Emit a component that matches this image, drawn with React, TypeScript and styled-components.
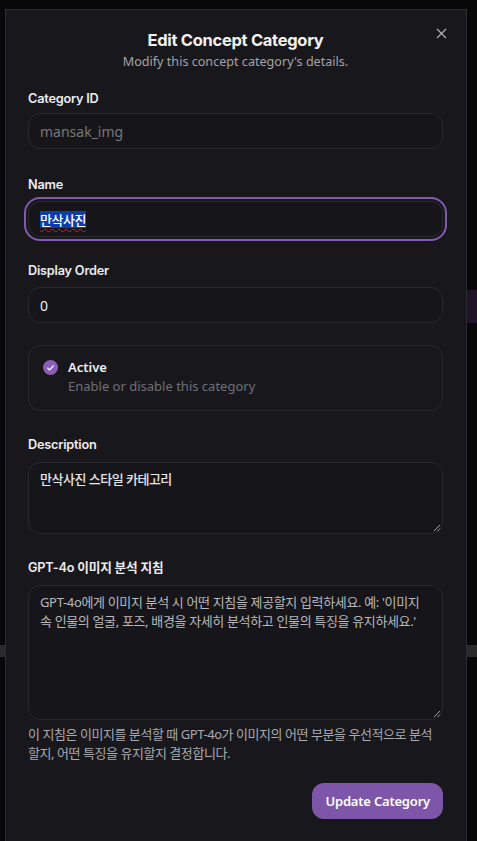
import React from "react";
import styled, { createGlobalStyle } from "styled-components";

const Global = createGlobalStyle`
  html, body { margin: 0; padding: 0; background: #050505; }
  body { font-family: "Noto Sans", "Noto Sans CJK KR", sans-serif; overflow: hidden; }
  * { box-sizing: border-box; }
`;

const Page = styled.div`
  position: relative;
  width: 477px;
  height: 841px;
  overflow: hidden;
  background: #080808;
`;

const Backdrop = styled.div`
  display: flex;
  flex-direction: column;
  padding-top: 290px;
`;

const BgRow = styled.div<{ $h: number; $mt: number; $bg: string }>`
  height: ${(p) => p.$h}px;
  margin-top: ${(p) => p.$mt}px;
  display: flex;
  justify-content: flex-end;
  background: ${(p) => p.$bg};
`;

const BgButton = styled.div`
  width: 30px;
  height: 33px;
  background: #1f1428;
  color: #4a3d57;
  font-size: 14px;
  display: flex;
  align-items: center;
  padding-left: 2px;
`;

const Dialog = styled.div`
  position: absolute;
  left: 5px;
  top: 9px;
  width: 462px;
  min-height: 860px;
  background: #18181c;
  border: 1px solid #2a2a30;
  padding: 18px 23px 24px 22px;
  display: flex;
  flex-direction: column;
`;

const Close = styled.button`
  position: absolute;
  top: 15px;
  right: 17px;
  width: 16px;
  height: 16px;
  padding: 0;
  border: 0;
  background: none;
  color: #a8a8ae;
  display: flex;
  align-items: center;
  justify-content: center;
`;

const Header = styled.div`
  display: flex;
  flex-direction: column;
  align-items: center;
  gap: 1px;
  margin-bottom: 19px;
`;

const Title = styled.h2`
  margin: 0;
  font-family: Inter, "Noto Sans", sans-serif;
  font-weight: 700;
  font-size: 16.5px;
  letter-spacing: -0.3px;
  color: #f2f2f2;
  line-height: 24px;
`;

const Subtitle = styled.p`
  margin: 0;
  font-size: 12.6px;
  color: #a3a3aa;
  line-height: 18px;
`;

const Field = styled.div<{ $gap?: number; $lg?: number }>`
  display: flex;
  flex-direction: column;
  gap: ${(p) => p.$lg ?? 7}px;
  margin-bottom: ${(p) => p.$gap ?? 25}px;
`;

const Label = styled.label`
  font-family: Inter, "Noto Sans", "Noto Sans CJK KR", sans-serif;
  font-weight: 600;
  font-size: 12.7px;
  letter-spacing: -0.2px;
  color: #ececee;
  line-height: 18px;
`;

const Box = styled.div<{ $focus?: boolean; $muted?: boolean }>`
  height: 36px;
  border-radius: 12px;
  border: 1px solid #28282e;
  background: #16161a;
  display: flex;
  align-items: center;
  padding: 0 11px;
  font-size: 14px;
  color: ${(p) => (p.$muted ? "#76767c" : "#ececee")};
  box-shadow: ${(p) => (p.$focus ? "0 0 0 2px #18181c, 0 0 0 4px #8559b0" : "none")};
`;

const Selected = styled.span`
  background: #0b3eaa;
  color: #ffffff;
  font-family: "Noto Sans CJK KR", sans-serif;
  font-weight: 500;
  font-size: 13px;
  letter-spacing: -0.5px;
  line-height: 17px;
  text-decoration: underline wavy #e0141e;
  text-underline-offset: 3px;
  text-decoration-thickness: 1px;
`;

const Card = styled.div`
  border: 1px solid #28282e;
  border-radius: 12px;
  padding: 12px 14px 14px 14px;
  display: flex;
  gap: 10px;
  align-items: flex-start;
  margin-top: -3px;
  margin-bottom: 25px;
`;

const Check = styled.span`
  width: 15px;
  height: 15px;
  border-radius: 50%;
  background: #8a5db8;
  display: flex;
  align-items: center;
  justify-content: center;
  margin-top: 2px;
  flex-shrink: 0;
`;

const CardText = styled.div`
  display: flex;
  flex-direction: column;
  gap: 1px;
`;

const CardTitle = styled.span`
  font-weight: 600;
  font-size: 13px;
  color: #f0f0f2;
  line-height: 18px;
`;

const CardSub = styled.span`
  font-size: 13px;
  color: #6f6f78;
  line-height: 19px;
`;

const Area = styled.div<{ $h: number }>`
  position: relative;
  height: ${(p) => p.$h}px;
  border-radius: 12px;
  border: 1px solid #28282e;
  background: #16161a;
  padding: 7px 11px;
  font-size: 13px;
  line-height: 19px;
  color: #dadade;
  font-family: "Noto Sans", "Noto Sans CJK KR", sans-serif;
`;

const AreaText = styled.div<{ $dim?: boolean }>`
  color: ${(p) => (p.$dim ? "#b9b9be" : "#e6e6ea")};
  font-weight: ${(p) => (p.$dim ? 400 : 500)};
  letter-spacing: ${(p) => (p.$dim ? "-0.35px" : "-0.5px")};
`;

const Grip = styled.svg`
  position: absolute;
  right: 1px;
  bottom: 1px;
`;

const Help = styled.p`
  margin: 5px 0 0 0;
  font-size: 13px;
  line-height: 19px;
  color: #a9a9b0;
  letter-spacing: -0.45px;
`;

const Footer = styled.div`
  display: flex;
  justify-content: flex-end;
  margin-top: 20px;
`;

const Button = styled.button`
  height: 36px;
  padding: 0 13px;
  border: 0;
  border-radius: 12px;
  background: #7e56a9;
  color: #ffffff;
  font-family: "Noto Sans", sans-serif;
  font-weight: 600;
  font-size: 13px;
  letter-spacing: -0.2px;
`;

const ResizeGrip = () => (
  <Grip width="9" height="9" viewBox="0 0 9 9">
    <path d="M8 2 L2 8 M8 5.5 L5.5 8" stroke="#a0a0a6" strokeWidth="1" />
  </Grip>
);

export default function App() {
  return (
    <Page>
      <Global />
      <Backdrop>
        <BgRow $h={33} $mt={0} $bg="transparent">
          <BgButton>y</BgButton>
        </BgRow>
        <BgRow $h={12} $mt={322} $bg="#2b2b2b" />
      </Backdrop>
      <Dialog>
        <Close aria-label="Close">
          <svg width="11" height="11" viewBox="0 0 11 11">
            <path d="M1 1 L10 10 M10 1 L1 10" stroke="#b0b0b6" strokeWidth="1.2" />
          </svg>
        </Close>
        <Header>
          <Title>Edit Concept Category</Title>
          <Subtitle>Modify this concept category's details.</Subtitle>
        </Header>

        <Field $lg={5} $gap={27}>
          <Label>Category ID</Label>
          <Box $muted>mansak_img</Box>
        </Field>

        <Field>
          <Label>Name</Label>
          <Box $focus>
            <Selected>만삭사진</Selected>
          </Box>
        </Field>

        <Field $lg={7}>
          <Label>Display Order</Label>
          <Box>0</Box>
        </Field>

        <Card>
          <Check>
            <svg width="9" height="9" viewBox="0 0 10 10">
              <path d="M1.5 5.2 L4 7.6 L8.6 2.6" stroke="#ffffff" strokeWidth="1.4" fill="none" />
            </svg>
          </Check>
          <CardText>
            <CardTitle>Active</CardTitle>
            <CardSub>Enable or disable this category</CardSub>
          </CardText>
        </Card>

        <Field $lg={8}>
          <Label>Description</Label>
          <Area $h={72}>
            <AreaText>만삭사진 스타일 카테고리</AreaText>
            <ResizeGrip />
          </Area>
        </Field>

        <Field $gap={0} $lg={8}>
          <Label>GPT-4o 이미지 분석 지침</Label>
          <Area $h={135}>
            <AreaText $dim>
              GPT-4o에게 이미지 분석 시 어떤 지침을 제공할지 입력하세요. 예: '이미지 속 인물의 얼굴, 포즈, 배경을 자세히 분석하고 인물의 특징을 유지하세요.'
            </AreaText>
            <ResizeGrip />
          </Area>
        </Field>
        <Help>
          이 지침은 이미지를 분석할 때 GPT-4o가 이미지의 어떤 부분을 우선적으로 분석할지, 어떤 특징을 유지할지 결정합니다.
        </Help>

        <Footer>
          <Button>Update Category</Button>
        </Footer>
      </Dialog>
    </Page>
  );
}
